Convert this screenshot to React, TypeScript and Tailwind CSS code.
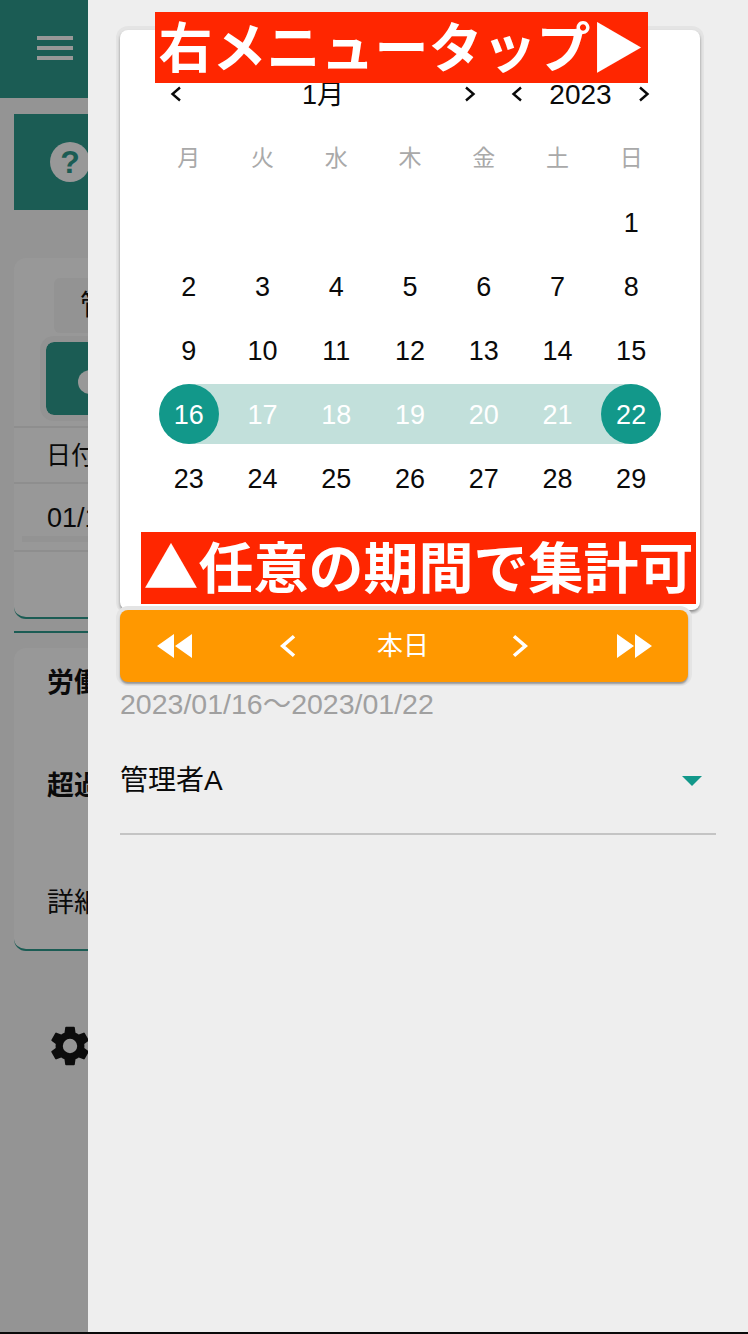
import React from "react";

const JP = "font-['Liberation_Sans','Noto_Sans_CJK_JP',sans-serif]";

function Chev({ dir, cls }: { dir: "l" | "r"; cls: string }) {
  return (
    <svg viewBox="0 0 12 16" className={cls} fill="none" stroke="currentColor" strokeWidth="2.4">
      <path d={dir === "l" ? "M10 1.5 L2.5 8 L10 14.5" : "M2 1.5 L9.5 8 L2 14.5"} />
    </svg>
  );
}

function Dbl({ dir }: { dir: "l" | "r" }) {
  return (
    <svg viewBox="0 0 36 24" className="w-[36px] h-[24px] text-white" fill="currentColor">
      {dir === "l" ? <path d="M0 12 L17 0 V24 Z M18 12 L35 0 V24 Z" /> : <path d="M1 0 L18 12 L1 24 Z M19 0 L36 12 L19 24 Z" />}
    </svg>
  );
}

const rows: (number | null)[][] = [
  [null, null, null, null, null, null, 1],
  [2, 3, 4, 5, 6, 7, 8],
  [9, 10, 11, 12, 13, 14, 15],
  [16, 17, 18, 19, 20, 21, 22],
  [23, 24, 25, 26, 27, 28, 29],
];

function Day({ n }: { n: number | null }) {
  if (n === null) return <div className="h-[64px]" />;
  if (n === 16 || n === 22) {
    return (
      <div className="h-[64px] flex items-center">
        <div
          className={
            n === 16
              ? "relative w-full h-[60px] flex items-center justify-center bg-[linear-gradient(90deg,transparent_50%,#c2e0db_50%)]"
              : "relative w-full h-[60px] flex items-center justify-center bg-[linear-gradient(90deg,#c2e0db_50%,transparent_50%)]"
          }
        >
          <span className="w-[60px] h-[60px] pt-[2px] rounded-full bg-[#12988a] text-white flex items-center justify-center">{n}</span>
        </div>
      </div>
    );
  }
  if (n > 16 && n < 22) {
    return (
      <div className="h-[64px] flex items-center">
        <div className="w-full h-[60px] pt-[2px] bg-[#c2e0db] text-white flex items-center justify-center">{n}</div>
      </div>
    );
  }
  return <div className="h-[64px] pt-[2px] flex items-center justify-center">{n}</div>;
}

export default function App() {
  return (
    <div className={`relative w-[748px] h-[1334px] flex overflow-hidden bg-[#949494] ${JP}`}>
      {/* dimmed page behind the drawer */}
      <div className="w-[88px] h-full shrink-0 overflow-hidden flex flex-col bg-[#949494]">
        <div className="h-[98px] shrink-0 bg-[#1b5c54] flex items-center pl-[37px]">
          <div className="w-[36px] mb-[2px] flex flex-col gap-[6px]">
            <div className="h-[4px] bg-[#989898]" />
            <div className="h-[4px] bg-[#989898]" />
            <div className="h-[4px] bg-[#989898]" />
          </div>
        </div>
        <div className="ml-[14px] mt-[16px] h-[96px] bg-[#1b5c54] flex items-center pl-[36px] shrink-0">
          <div className="w-[40px] h-[40px] shrink-0 rounded-full bg-[#989898] text-[#1b5c54] text-[32px] font-bold flex items-center justify-center">?</div>
        </div>
        <div className="ml-[14px] mt-[48px] h-[361px] w-[120px] shrink-0 bg-[#989898] rounded-[12px] flex flex-col border-b-2 border-[#1b5c54]">
          <div className="pt-[20px] pl-[40px] h-[84px] shrink-0">
            <div className="h-[55px] w-[100px] rounded-[6px] bg-[#939393] pl-[26px] flex items-center text-[28px] text-[#0a0a0a] whitespace-nowrap">管理</div>
          </div>
          <div className="h-[86px] shrink-0 pl-[32px] border-b-2 border-[#8e8e8e]">
            <div className="w-[100px] h-[73px] bg-[#1b5c54] rounded-[8px] outline-[6px] outline-[#939393] flex items-center pl-[32px]">
              <div className="w-[24px] h-[24px] mt-[7px] rounded-full bg-[#989898] shrink-0" />
            </div>
          </div>
          <div className="h-[56px] shrink-0 pl-[32px] pt-[1px] flex items-center text-[25px] text-[#0a0a0a] border-b-2 border-[#8e8e8e] whitespace-nowrap">日付</div>
          <div className="h-[68px] shrink-0 pl-[33px] pt-[14px] text-[27px] text-[#0a0a0a] border-b-2 border-[#8e8e8e] whitespace-nowrap relative">
            01/16
            <div className="absolute left-[8px] right-0 bottom-[8px] h-[6px] bg-[#939393]" />
          </div>
        </div>
        <div className="ml-[14px] mt-[12px] h-[2px] shrink-0 bg-[#1b5c54]" />
        <div className="ml-[14px] mt-[15px] h-[303px] w-[120px] shrink-0 bg-[#989898] rounded-[12px] border-b-2 border-[#1b5c54] pl-[33px] text-[#0a0a0a] text-[27px] whitespace-nowrap flex flex-col">
          <div className="font-bold mt-[17px] h-[36px] leading-[36px]">労働</div>
          <div className="font-bold mt-[67px] h-[36px] leading-[36px]">超過</div>
          <div className="mt-[81px] h-[36px] leading-[36px]">詳細</div>
        </div>
        <div className="ml-[48px] mt-[73px] w-[44px] h-[44px] shrink-0 text-[#0c0c0c]">
          <svg viewBox="0 0 24 24" className="w-[48px] h-[48px] -ml-[2px] -mt-[2px]" fill="currentColor">
            <path d="M19.14 12.94c.04-.3.06-.61.06-.94 0-.32-.02-.64-.07-.94l2.03-1.58a.49.49 0 0 0 .12-.61l-1.92-3.32a.49.49 0 0 0-.59-.22l-2.39.96c-.5-.38-1.03-.7-1.62-.94l-.36-2.54a.48.48 0 0 0-.48-.41h-3.84a.48.48 0 0 0-.47.41l-.36 2.54c-.59.24-1.13.57-1.62.94l-2.39-.96a.48.48 0 0 0-.59.22L2.74 8.87a.48.48 0 0 0 .12.61l2.03 1.58c-.05.3-.09.63-.09.94s.02.64.07.94l-2.03 1.58a.49.49 0 0 0-.12.61l1.92 3.32c.12.22.37.29.59.22l2.39-.96c.5.38 1.03.7 1.62.94l.36 2.54c.05.24.24.41.48.41h3.84c.24 0 .44-.17.47-.41l.36-2.54c.59-.24 1.13-.56 1.62-.94l2.39.96c.22.08.47 0 .59-.22l1.92-3.32a.48.48 0 0 0-.12-.61l-2.01-1.58zM12 15.6A3.6 3.6 0 1 1 12 8.4a3.6 3.6 0 0 1 0 7.2z" />
          </svg>
        </div>
      </div>

      {/* drawer */}
      <div className="relative z-10 flex-1 h-full bg-[#eeeeee] pl-[32px] pt-[30px] flex flex-col">
        <div className="w-[580px] h-[580px] shrink-0 bg-white rounded-[8px] shadow-[0_2px_3px_rgba(0,0,0,0.4),0_0_0_4px_#e4e4e4] pl-[32px] text-[#0a0a0a]">
          <div className="h-[96px] pt-[32px] flex">
            <div className="w-[324px] h-[64px] flex items-center justify-between pl-[18px]">
              <Chev dir="l" cls="w-[12px] h-[16px]" />
              <span className="text-[27px] pt-[2px]">1月</span>
              <Chev dir="r" cls="w-[12px] h-[16px]" />
            </div>
            <div className="w-[174px] h-[64px] flex items-center pl-[35px] justify-between">
              <Chev dir="l" cls="w-[12px] h-[16px]" />
              <span className="text-[28px] pt-[2px]">2023</span>
              <Chev dir="r" cls="w-[12px] h-[16px]" />
            </div>
          </div>
          <div className="grid grid-cols-7 w-[516px] text-[#a9a9a9] text-[23px]">
            {["月", "火", "水", "木", "金", "土", "日"].map((d) => (
              <div key={d} className="h-[64px] flex items-center justify-center">{d}</div>
            ))}
          </div>
          <div className="grid grid-cols-7 w-[516px] text-[27px]">
            {rows.flat().map((n, i) => (
              <Day key={i} n={n} />
            ))}
          </div>
        </div>

        <div className="w-[568px] h-[72px] shrink-0 bg-[#ff9800] rounded-[8px] shadow-[0_2px_2px_rgba(0,0,0,0.35),0_0_0_4px_#e4e4e4] grid grid-cols-[110px_116px_114px_120px_108px] items-center text-white">
          <div className="flex justify-center"><Dbl dir="l" /></div>
          <div className="flex justify-center"><Chev dir="l" cls="w-[18px] h-[24px]" /></div>
          <div className="flex justify-center text-[26px]">本日</div>
          <div className="flex justify-center"><Chev dir="r" cls="w-[18px] h-[24px]" /></div>
          <div className="flex justify-center"><Dbl dir="r" /></div>
        </div>

        <div className="mt-[7px] h-[30px] leading-[30px] text-[28.5px] text-[#a0a0a0] whitespace-nowrap">2023/01/16〜2023/01/22</div>

        <div className="mt-[42px] w-[596px] h-[74px] border-b-2 border-[#c4c4c4] flex justify-between text-[28px] text-[#0a0a0a]">
          <span className="h-[40px] leading-[40px]">管理者A</span>
          <svg viewBox="0 0 20 10" className="w-[20px] h-[10px] mt-[15px] mr-[14px] text-[#12988a]" fill="currentColor">
            <path d="M0 0 H20 L10 10 Z" />
          </svg>
        </div>
      </div>

      {/* annotations laid over the capture */}
      <div className="absolute z-20 left-[155px] top-[12px] w-[493px] h-[71px] pb-[7px] bg-[#ff2600] text-white font-bold text-[54px] font-['Noto_Sans_CJK_JP',sans-serif] flex items-center justify-center whitespace-nowrap">右メニュータップ▶</div>
      <div className="absolute z-20 left-[141px] top-[532px] w-[555px] h-[72px] pb-[7px] bg-[#ff2600] text-white font-bold text-[55px] font-['Noto_Sans_CJK_JP',sans-serif] flex items-center justify-center whitespace-nowrap">▲任意の期間で集計可</div>
      <div className="absolute z-30 left-0 right-0 bottom-0 h-[2px] bg-[#0a0a0a]" />
    </div>
  );
}
